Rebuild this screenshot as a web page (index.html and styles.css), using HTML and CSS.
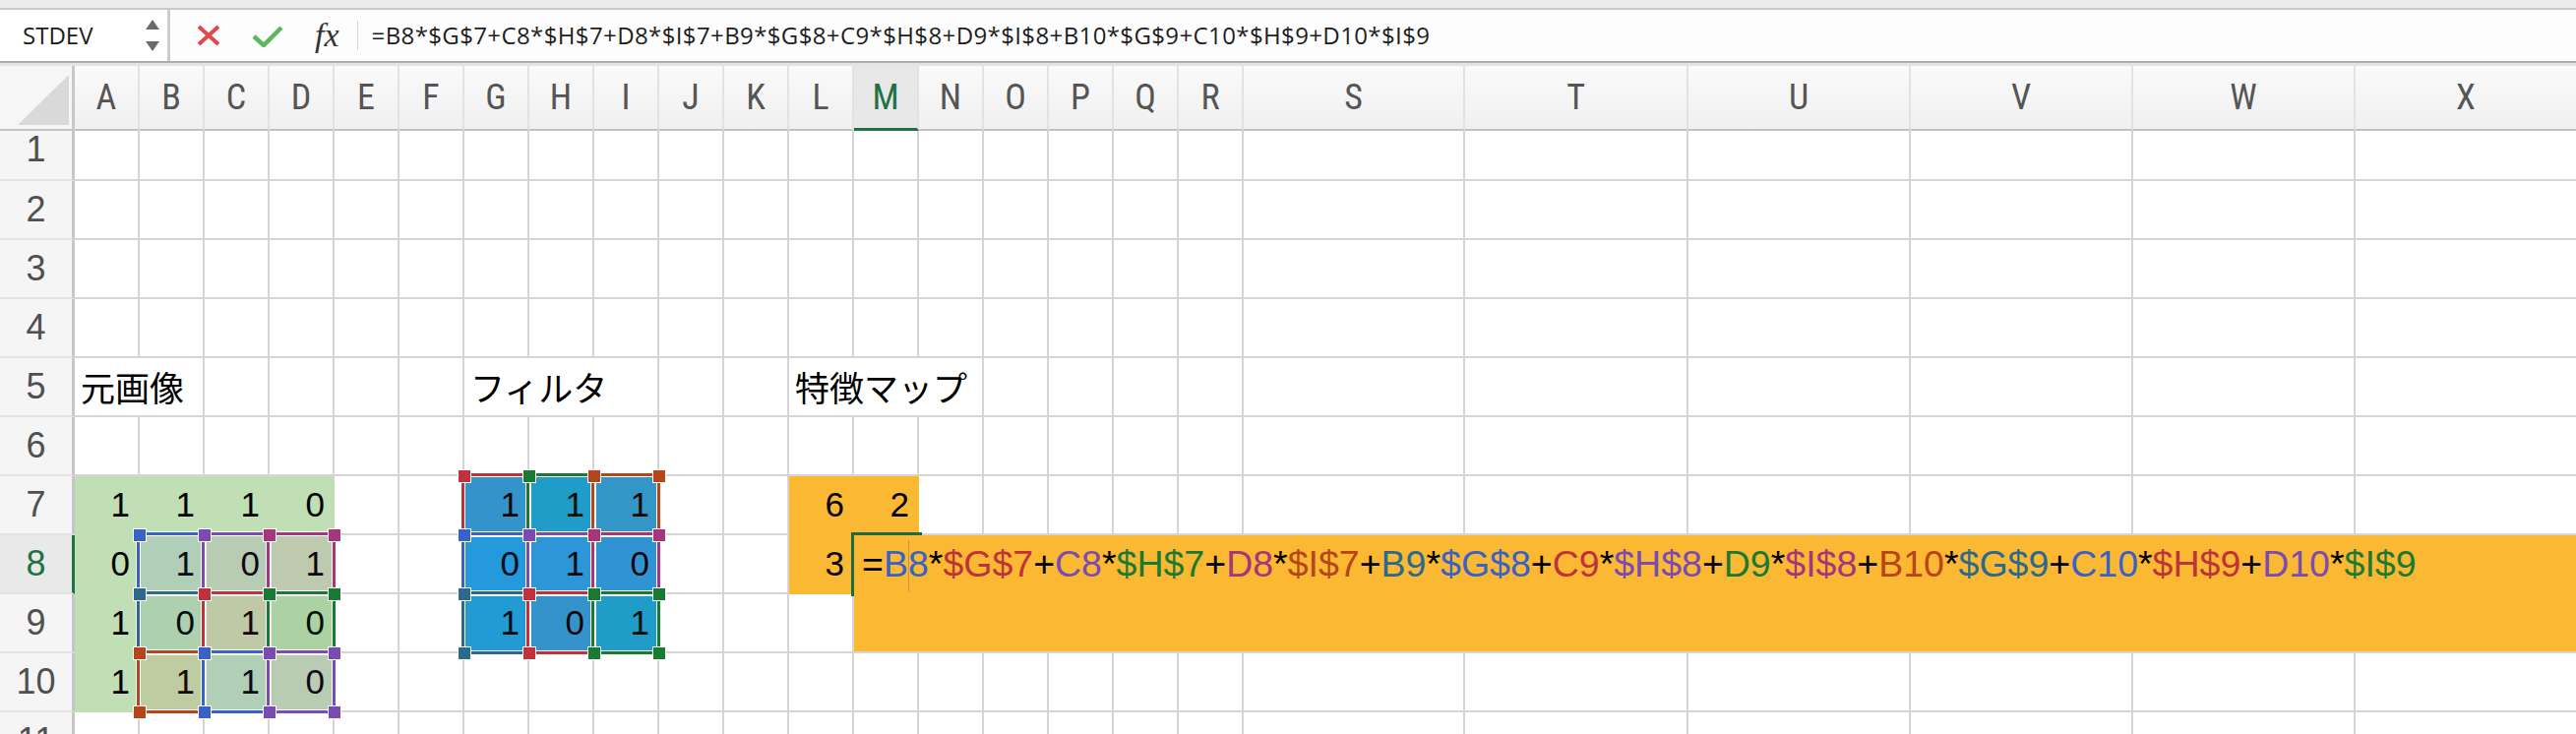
FILE: index.html
```html
<!DOCTYPE html>
<html lang="ja">
<head>
<meta charset="utf-8">
<title>Excel</title>
<link rel="stylesheet" href="styles.css">
</head>
<body>
<div class="topstrip"></div>
<div class="fbar">
  <div class="namebox">
    <span class="name">STDEV</span>
    <svg class="spin" width="14" height="32" viewBox="0 0 14 32"><path d="M0 10 L14 10 L7 0 Z M0 22 L14 22 L7 32 Z" fill="#6b6b6b"/></svg>
  </div>
  <div class="fbtns">
    <svg class="ic-x" width="24" height="22" viewBox="0 0 24 22"><path d="M2 2 L22 20 M22 2 L2 20" stroke="#df4a4f" stroke-width="4" fill="none"/></svg>
    <svg class="ic-ok" width="32" height="24" viewBox="0 0 32 24"><path d="M2 13 L12 22 L30 4" stroke="#5db55d" stroke-width="4.5" fill="none"/></svg>
    <span class="fx">fx</span>
    <span class="sep"></span>
  </div>
  <div class="ftext">=B8*$G$7+C8*$H$7+D8*$I$7+B9*$G$8+C9*$H$8+D9*$I$8+B10*$G$9+C10*$H$9+D10*$I$9</div>
</div>
<div class="fbar-bottom"></div>

<div class="sheet">
  <div class="corner"><svg width="73" height="64" viewBox="0 0 73 64"><polygon points="70,9 70,60 18,60" fill="#d9d9d9"/></svg></div>
  <div class="ch">A</div><div class="ch">B</div><div class="ch">C</div><div class="ch">D</div><div class="ch">E</div><div class="ch">F</div>
  <div class="ch">G</div><div class="ch">H</div><div class="ch">I</div><div class="ch">J</div><div class="ch">K</div><div class="ch">L</div>
  <div class="ch sel">M</div><div class="ch">N</div><div class="ch">O</div><div class="ch">P</div><div class="ch">Q</div><div class="ch">R</div>
  <div class="ch">S</div><div class="ch">T</div><div class="ch">U</div><div class="ch">V</div><div class="ch">W</div><div class="ch">X</div>

  <div class="rh first">1</div>
  <i></i><i></i><i></i><i></i><i></i><i></i>
  <i></i><i></i><i></i><i></i><i></i><i></i>
  <i></i><i></i><i></i><i></i><i></i><i></i>
  <i></i><i></i><i></i><i></i><i></i><i></i>

  <div class="rh">2</div>
  <i></i><i></i><i></i><i></i><i></i><i></i>
  <i></i><i></i><i></i><i></i><i></i><i></i>
  <i></i><i></i><i></i><i></i><i></i><i></i>
  <i></i><i></i><i></i><i></i><i></i><i></i>

  <div class="rh">3</div>
  <i></i><i></i><i></i><i></i><i></i><i></i>
  <i></i><i></i><i></i><i></i><i></i><i></i>
  <i></i><i></i><i></i><i></i><i></i><i></i>
  <i></i><i></i><i></i><i></i><i></i><i></i>

  <div class="rh">4</div>
  <i></i><i></i><i></i><i></i><i></i><i></i>
  <i></i><i></i><i></i><i></i><i></i><i></i>
  <i></i><i></i><i></i><i></i><i></i><i></i>
  <i></i><i></i><i></i><i></i><i></i><i></i>

  <div class="rh">5</div>
  <i class="lbl s2">元画像</i><i></i><i></i><i></i><i></i>
  <i class="lbl s3">フィルタ</i><i></i><i></i>
  <i class="lbl s3">特徴マップ</i>
  <i></i><i></i><i></i><i></i><i></i>
  <i></i><i></i><i></i><i></i><i></i>

  <div class="rh">6</div>
  <i></i><i></i><i></i><i></i><i></i><i></i>
  <i></i><i></i><i></i><i></i><i></i><i></i>
  <i></i><i></i><i></i><i></i><i></i><i></i>
  <i></i><i></i><i></i><i></i><i></i><i></i>

  <div class="rh">7</div>
  <i class="n g">1</i><i class="n g">1</i><i class="n g">1</i><i class="n g">0</i>
  <i></i><i></i>
  <i class="n bl">1</i><i class="n bl">1</i><i class="n bl">1</i>
  <i></i><i></i>
  <i class="n o">6</i><i class="n o">2</i>
  <i></i><i></i><i></i><i></i><i></i><i></i>
  <i></i><i></i><i></i><i></i><i></i>

  <div class="rh sel">8</div>
  <i class="n g">0</i><i class="n g">1</i><i class="n g">0</i><i class="n g">1</i>
  <i></i><i></i>
  <i class="n bl">0</i><i class="n bl">1</i><i class="n bl">0</i>
  <i></i><i></i>
  <i class="n o">3</i>
  <i></i><i></i><i></i><i></i><i></i><i></i>
  <i></i><i></i><i></i><i></i><i></i><i></i>

  <div class="rh">9</div>
  <i class="n g">1</i><i class="n g">0</i><i class="n g">1</i><i class="n g">0</i>
  <i></i><i></i>
  <i class="n bl">1</i><i class="n bl">0</i><i class="n bl">1</i>
  <i></i><i></i><i></i><i></i><i></i>
  <i></i><i></i><i></i><i></i><i></i>
  <i></i><i></i><i></i><i></i><i></i>

  <div class="rh">10</div>
  <i class="n g">1</i><i class="n g">1</i><i class="n g">1</i><i class="n g">0</i>
  <i></i><i></i><i></i><i></i><i></i>
  <i></i><i></i><i></i><i></i><i></i>
  <i></i><i></i><i></i><i></i><i></i>
  <i></i><i></i><i></i><i></i><i></i>

  <div class="rh">11</div>
  <i></i><i></i><i></i><i></i><i></i><i></i>
  <i></i><i></i><i></i><i></i><i></i><i></i>
  <i></i><i></i><i></i><i></i><i></i><i></i>
  <i></i><i></i><i></i><i></i><i></i><i></i>

  <div class="ov">
    <div class="hl k1 r8 cB"></div>
    <div class="hl k2 r7 cG"></div>
    <div class="hl k3 r8 cC"></div>
    <div class="hl k4 r7 cH"></div>
    <div class="hl k5 r8 cD"></div>
    <div class="hl k6 r7 cI"></div>
    <div class="hl k7 r9 cB"></div>
    <div class="hl k1 r8 cG"></div>
    <div class="hl k2 r9 cC"></div>
    <div class="hl k3 r8 cH"></div>
    <div class="hl k4 r9 cD"></div>
    <div class="hl k5 r8 cI"></div>
    <div class="hl k6 r10 cB"></div>
    <div class="hl k7 r9 cG"></div>
    <div class="hl k1 r10 cC"></div>
    <div class="hl k2 r9 cH"></div>
    <div class="hl k3 r10 cD"></div>
    <div class="hl k4 r9 cI"></div>

    <div class="act"></div>
    <div class="edit">=<span class="k1">B<span class="caret"></span>8</span>*<span class="k2">$G$7</span>+<span class="k3">C8</span>*<span class="k4">$H$7</span>+<span class="k5">D8</span>*<span class="k6">$I$7</span>+<span class="k7">B9</span>*<span class="k1">$G$8</span>+<span class="k2">C9</span>*<span class="k3">$H$8</span>+<span class="k4">D9</span>*<span class="k5">$I$8</span>+<span class="k6">B10</span>*<span class="k7">$G$9</span>+<span class="k1">C10</span>*<span class="k2">$H$9</span>+<span class="k3">D10</span>*<span class="k4">$I$9</span></div>
  </div>
</div>
</body>
</html>
```

FILE: styles.css
```css
* { box-sizing: border-box; margin: 0; padding: 0; }
html, body { width: 2618px; height: 746px; overflow: hidden; background: #fff; }
body { font-family: "Liberation Sans", Arial, sans-serif; color: #000; }

/* top chrome */
.topstrip { height: 10px; background: #ececec; border-bottom: 2px solid #c9c9c9; }
.fbar { height: 52px; display: flex; align-items: center; background: #fdfdfd; }
.namebox {
  width: 173px; height: 100%;
  display: flex; align-items: center;
  padding-left: 23px;
  background: #fff;
  border-right: 3px solid #cdcdcd;
  font: 24px/52px "Open Sans", sans-serif; color: #1c1c1c;
}
.namebox .name { width: 125px; }
.fbtns { display: flex; align-items: center; height: 100%; }
.ic-x { margin-left: 27px; }
.ic-ok { margin-left: 32px; }
.fx {
  margin-left: 32px;
  font: italic 34px/52px "Liberation Serif", serif; color: #333;
}
.sep { width: 1px; height: 30px; background: #d6d6d6; margin-left: 18px; }
.ftext {
  margin-left: 14px;
  font: 24px/52px "Open Sans", sans-serif; color: #1e1e1e;
  letter-spacing: 0.38px; white-space: nowrap;
}
.fbar-bottom { height: 5px; border-top: 2px solid #aeaeae; background: #e4e4e4; }

/* sheet */
.sheet {
  --cols: 76px repeat(18, 66px) 225px 227px repeat(4, 226px);
  --rows: 66px 51px repeat(10, 60px);
  position: relative;
  display: grid;
  grid-template-columns: var(--cols);
  grid-template-rows: var(--rows);
}
.corner {
  background: #f6f6f6;
  border-right: 3px solid #c8c8c8;
  border-bottom: 2px solid #c2c2c2;
}
.corner svg { display: block; }
.ch {
  display: flex; align-items: center; justify-content: center;
  background: linear-gradient(#fafafa, #f0f0f0);
  border-right: 2px solid #e2e2e2;
  border-bottom: 2px solid #c2c2c2;
  font: 36px "Liberation Sans Narrow", "Roboto Condensed", "Liberation Sans", sans-serif;
  color: #555;
}
.ch.sel { color: #1f7244; background: #e8e8e8; border-bottom: 3px solid #1f7244; }
.rh {
  display: flex; align-items: center; justify-content: center;
  background: #f5f5f5;
  border-right: 3px solid #c6c6c6;
  border-bottom: 2px solid #e2e2e2;
  font-size: 36px; color: #505050;
}
.rh.first { padding-bottom: 12px; }
.rh.sel { color: #1f7244; background: #e9e9e9; border-right-color: #1f7244; }

.sheet i {
  display: block;
  font-style: normal;
  border-right: 2px solid #d5d5d5;
  border-bottom: 2px solid #d5d5d5;
  font-size: 35px; line-height: 58px;
  white-space: nowrap;
}
.sheet i.n { text-align: right; padding-right: 8px; }
.sheet i.g { background: #c1dfb4; border-color: #c1dfb4; }
.sheet i.bl { background: #22a1de; border-color: #22a1de; }
.sheet i.o { background: #fbb832; border-color: #fbb832; }
.sheet i.lbl { font-family: "Noto Sans CJK JP", sans-serif; padding-left: 6px; }
.s2 { grid-column: span 2; }
.s3 { grid-column: span 3; }

/* overlay: reference highlights and edit box */
.ov {
  position: absolute; inset: 0;
  display: grid;
  grid-template-columns: var(--cols);
  grid-template-rows: var(--rows);
  pointer-events: none;
}
.k1 { --c: #3a62c6; --t: rgba(58, 98, 198, .12); }
.k2 { --c: #c0323b; --t: rgba(192, 50, 59, .12); }
.k3 { --c: #7b4caf; --t: rgba(123, 76, 175, .12); }
.k4 { --c: #1b7a31; --t: rgba(27, 122, 49, .12); }
.k5 { --c: #a5367b; --t: rgba(165, 54, 123, .12); }
.k6 { --c: #b5461b; --t: rgba(181, 70, 27, .12); }
.k7 { --c: #2b6a8c; --t: rgba(43, 106, 140, .12); }

.r7 { grid-row: 8; } .r8 { grid-row: 9; } .r9 { grid-row: 10; } .r10 { grid-row: 11; }
.cB { grid-column: 3; } .cC { grid-column: 4; } .cD { grid-column: 5; }
.cG { grid-column: 8; } .cH { grid-column: 9; } .cI { grid-column: 10; }

.hl {
  position: relative;
  margin: -3px -1px -1px -3px;
  border: 3px solid var(--c);
  background: var(--t);
  background-clip: padding-box;
  box-shadow: 0 0 0 1px #fff, inset 0 0 0 1px #fff;
}
.hl::before {
  content: "";
  position: absolute; left: -7px; top: -7px;
  width: 12px; height: 12px;
  background: var(--c);
  border: 1px solid #fff;
  box-shadow:
    66px 0 0 -1px var(--c), 66px 0 0 0 #fff,
    0 60px 0 -1px var(--c), 0 60px 0 0 #fff,
    66px 60px 0 -1px var(--c), 66px 60px 0 0 #fff;
}

.act {
  grid-row: 9; grid-column: 14;
  margin: -3px -3px -2px -3px;
  border: 3px solid #1f6b41;
}
.edit {
  grid-row: 9 / 11; grid-column: 14 / -1;
  margin-bottom: 2px;
  background: #fbb832;
  padding-left: 8px;
  font-size: 37.5px; line-height: 58px;
  white-space: nowrap; overflow: hidden;
  color: #000;
}
.edit span { color: var(--c); }
.edit .caret {
  display: inline-block;
  width: 1px; height: 52px;
  margin-right: -1px;
  vertical-align: -15px;
  background: rgba(120, 110, 100, .45);
}
```
